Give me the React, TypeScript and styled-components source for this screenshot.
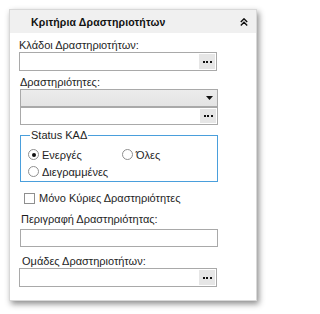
import React from "react";
import styled, { createGlobalStyle } from "styled-components";

const Global = createGlobalStyle`
  html, body { margin: 0; padding: 0; background: #ffffff; }
  body { font-family: "Liberation Sans", Arial, sans-serif; }
`;

const Page = styled.div`
  width: 272px;
  height: 314px;
  padding: 9px 0 0 9px;
  box-sizing: border-box;
`;

const Panel = styled.div`
  width: 248px;
  height: 292px;
  box-sizing: border-box;
  background: #ffffff;
  border: 1px solid #d8d8d8;
  box-shadow: 2px 3px 6px rgba(0, 0, 0, 0.45);
  display: flex;
  flex-direction: column;
`;

const Header = styled.div`
  height: 23px;
  background: #f0f0f0;
  display: flex;
  align-items: center;
  justify-content: space-between;
  padding: 0 8px 0 21px;
  flex-shrink: 0;
`;

const Title = styled.span`
  font-family: "Liberation Sans", Arial, sans-serif;
  font-weight: bold;
  font-size: 10.5px;
  letter-spacing: 0.15px;
  color: #111;
`;

const Body = styled.div`
  display: flex;
  flex-direction: column;
  padding: 0 0 0 9px;
  font-family: "Liberation Sans", Arial, sans-serif;
  font-size: 11px;
  color: #1e1e1e;
`;

const Label = styled.div<{ $top: number; $indent?: number }>`
  margin-top: ${(p) => p.$top}px;
  padding-left: ${(p) => p.$indent ?? 0}px;
  height: 14px;
  line-height: 14px;
  white-space: nowrap;
`;

const Field = styled.div<{ $top: number; $indent?: number; $h?: number }>`
  margin-top: ${(p) => p.$top}px;
  margin-left: ${(p) => p.$indent ?? 0}px;
  width: 198px;
  height: ${(p) => p.$h ?? 19}px;
  box-sizing: border-box;
  border: 1px solid #a9a9a9;
  background: #ffffff;
  display: flex;
  justify-content: flex-end;
  align-items: stretch;
`;

const Select = styled(Field)`
  background: linear-gradient(#ececec, #e4e4e4);
  align-items: center;
  padding-right: 4px;
`;

const DotsButton = styled.div`
  width: 16px;
  margin: 1px;
  background: #e6e6e6;
  display: flex;
  align-items: center;
  justify-content: center;
  gap: 1.5px;
`;

const Dot = styled.span`
  width: 2px;
  height: 2px;
  background: #111;
`;

const Group = styled.fieldset`
  margin: 4px 0 0 1px;
  width: 198px;
  height: 53px;
  box-sizing: border-box;
  border: 1px solid #4a9fdc;
  padding: 5px 0 0 7px;
  display: grid;
  grid-template-columns: 94px auto;
  grid-auto-rows: 17px;
  align-content: start;
`;

const Legend = styled.legend`
  padding: 0 1px;
  margin-left: 2px;
  height: 12px;
  line-height: 12px;
  font-size: 11px;
`;

const Option = styled.label`
  display: flex;
  align-items: center;
  gap: 3px;
  white-space: nowrap;
`;

const Radio = styled.span<{ $on?: boolean }>`
  width: 11px;
  height: 11px;
  box-sizing: border-box;
  border-radius: 50%;
  border: 1px solid #8f8f8f;
  background: #fff;
  display: flex;
  align-items: center;
  justify-content: center;
  &::after {
    content: "";
    width: 4px;
    height: 4px;
    border-radius: 50%;
    background: ${(p) => (p.$on ? "#111" : "transparent")};
  }
`;

const CheckRow = styled.label`
  margin: 10px 0 0 5px;
  display: flex;
  align-items: center;
  gap: 4px;
  height: 12px;
  white-space: nowrap;
`;

const Box = styled.span`
  width: 11px;
  height: 11px;
  box-sizing: border-box;
  border: 1px solid #8f8f8f;
  background: #fff;
`;

const Dots = () => (
  <DotsButton>
    <Dot />
    <Dot />
    <Dot />
  </DotsButton>
);

export default function App() {
  return (
    <>
      <Global />
      <Page>
        <Panel>
          <Header>
            <Title>Κριτήρια Δραστηριοτήτων</Title>
            <svg width="8" height="8" viewBox="0 0 8 8">
              <path d="M0.8 4 L4 0.8 L7.2 4 M0.8 7.4 L4 4.2 L7.2 7.4" stroke="#111" strokeWidth="1.4" fill="none" />
            </svg>
          </Header>
          <Body>
            <Label $top={5}>Κλάδοι Δραστηριοτήτων:</Label>
            <Field $top={0}>
              <Dots />
            </Field>
            <Label $top={4} $indent={1}>Δραστηριότητες:</Label>
            <Select $top={0} $indent={1} $h={18}>
              <svg width="7" height="4" viewBox="0 0 7 4">
                <path d="M0 0 H7 L3.5 4 Z" fill="#111" />
              </svg>
            </Select>
            <Field $top={0} $indent={1} $h={18}>
              <Dots />
            </Field>
            <Group>
              <Legend>Status ΚΑΔ</Legend>
              <Option>
                <Radio $on />
                Ενεργές
              </Option>
              <Option>
                <Radio />
                Όλες
              </Option>
              <Option>
                <Radio />
                Διεγραμμένες
              </Option>
            </Group>
            <CheckRow>
              <Box />
              Μόνο Κύριες Δραστηριότητες
            </CheckRow>
            <Label $top={8} $indent={2}>Περιγραφή Δραστηριότητας:</Label>
            <Field $top={3} $indent={1} $h={18} />
            <Label $top={7} $indent={3}>Ομάδες Δραστηριοτήτων:</Label>
            <Field $top={0} $h={19}>
              <Dots />
            </Field>
          </Body>
        </Panel>
      </Page>
    </>
  );
}
